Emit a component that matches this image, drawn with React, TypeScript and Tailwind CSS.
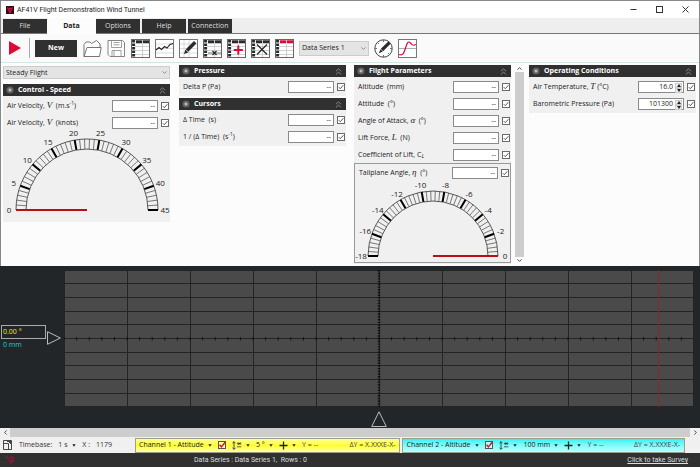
import { useState, type ReactNode } from "react";
import { ChevronDown, ChevronUp, ChevronLeft, ChevronRight, ChevronsUp } from "lucide-react";

const tabs = ["File", "Data", "Options", "Help", "Connection"];

function Sym({ children }: { children: ReactNode }) {
    return <i className="font-['Liberation_Serif',serif] text-[9px] leading-none">{children}</i>;
}

function Tick({ label }: { label: string }) {
    return (
        <span className="relative flex size-2 shrink-0">
            <input
                type="checkbox"
                defaultChecked
                aria-label={label}
                className="peer size-2 appearance-none border border-[#6a6a6a] bg-white"
            />
            <svg
                viewBox="0 0 8 8"
                className="pointer-events-none absolute inset-0 hidden size-2 peer-checked:block"
                fill="none"
                stroke="#444"
            >
                <path d="M1.8 4.2 3.3 5.7 6.4 2.2" strokeWidth="0.9" />
            </svg>
        </span>
    );
}

type RowProps = { id: string; label: ReactNode; value?: string; spin?: boolean };

function Row({ id, label, value = "--", spin }: RowProps) {
    return (
        <div className="flex h-[17px] items-center gap-[3px] pr-px pl-1">
            <label htmlFor={id} className="flex-1 whitespace-pre text-[#222]">
                {label}
            </label>
            <div className="flex h-3 w-[46px] border border-[#8a8a8a] bg-white">
                <input
                    id={id}
                    defaultValue={value}
                    className="w-0 min-w-0 flex-1 bg-transparent px-0.5 text-right text-[#222] outline-none"
                />
                {spin && (
                    <span className="my-px mr-px flex w-[7px] flex-col">
                        <button aria-label="Increase" className="flex flex-1 items-center justify-center border border-[#ccc] bg-[#eee]">
                            <svg viewBox="0 0 4 3" className="h-[3px] w-1">
                                <path d="M0 3 2 0 4 3z" fill="#222" />
                            </svg>
                        </button>
                        <button aria-label="Decrease" className="flex flex-1 items-center justify-center border border-[#ccc] bg-[#eee]">
                            <svg viewBox="0 0 4 3" className="h-[3px] w-1">
                                <path d="M0 0 2 3 4 0z" fill="#222" />
                            </svg>
                        </button>
                    </span>
                )}
            </div>
            <Tick label={`Show ${id}`} />
        </div>
    );
}

function Panel({ title, children }: { title: string; children: ReactNode }) {
    const [open, setOpen] = useState(true);
    return (
        <section className="bg-[#f0f0f0]">
            <h2>
                <button
                    onClick={() => setOpen(!open)}
                    aria-expanded={open}
                    className="flex h-3 w-full items-center bg-[#303030] pr-0.5 pl-[3px] text-left font-bold text-white"
                >
                    <svg viewBox="0 0 8 8" className="mr-1 size-2">
                        <circle cx="4" cy="4" r="3.6" fill="#606060" />
                        <circle cx="4" cy="4" r="1.8" fill="#999" />
                        <circle cx="4" cy="4" r="0.9" fill="#ccc" />
                    </svg>
                    <span className="flex-1">{title}</span>
                    <ChevronsUp className="size-[11px] text-[#8b939c]" strokeWidth={2} />
                </button>
            </h2>
            {open && <div className="py-px">{children}</div>}
        </section>
    );
}

type GaugeProps = {
    labels: number[];
    width: number;
    height: number;
    cx: number;
    cy: number;
    radius: number;
    atEnd?: boolean;
};

function Gauge({ labels, width, height, cx, cy, radius, atEnd }: GaugeProps) {
    const inner = radius - 10;
    const steps = (labels.length - 1) * 5;
    const at = (r: number, i: number) => {
        const a = Math.PI * (1 - i / steps);
        return [cx + r * Math.cos(a), cy - r * Math.sin(a)];
    };
    const line = (i: number) => {
        const [x1, y1] = at(inner, i);
        const [x2, y2] = at(radius, i);
        return `M${x1} ${y1}L${x2} ${y2}`;
    };
    const arc = (r: number) => `M${cx - r} ${cy}A${r} ${r} 0 0 1 ${cx + r} ${cy}`;
    const all = Array.from({ length: steps + 1 }, (_, i) => i);

    return (
        <svg viewBox={`0 0 ${width} ${height}`} className="block w-full overflow-visible" fill="none">
            <path d={arc(radius) + arc(inner)} stroke="#333" strokeWidth="0.8" />
            <path d={all.filter((i) => i % 5).map(line).join("")} stroke="#444" strokeWidth="0.7" />
            <path d={all.filter((i) => i % 5 === 0).map(line).join("")} stroke="#000" strokeWidth="2" />
            <path d={`M${cx} ${cy}H${atEnd ? cx + radius : cx - radius}`} stroke="#b80f14" strokeWidth="1.8" />
            {labels.map((n, i) => {
                const [x, y] = at(radius + 7, i * 5);
                return (
                    <text key={n} x={x} y={y + 3} textAnchor="middle" fontSize="8" fill="#222">
                        {n}
                    </text>
                );
            })}
        </svg>
    );
}

function ToolButton({ label, children }: { label: string; children: ReactNode }) {
    return (
        <button aria-label={label} className="size-[19px] shrink-0">
            <svg viewBox="0 0 19 19" className="size-[19px]" fill="none">
                {children}
            </svg>
        </button>
    );
}

function Grid({ head = "#2b2b2b" }: { head?: string }) {
    return (
        <>
            <rect x="0.5" y="0.5" width="18" height="18" fill="#fff" stroke="#666" />
            <path d="M4 7.5H18M4 11.5H18M4 15.5H18M11.5 5V18" stroke="#c4c4c4" strokeWidth="0.8" />
            <path d="M5 2.8H18" stroke={head} strokeWidth="3" />
            <path d="M11.5 1V5" stroke="#fff" strokeWidth="0.7" />
            <path d="M2.6 1V18" stroke="#2b2b2b" strokeWidth="3" strokeDasharray="2.6 0.9" />
        </>
    );
}

function Caret() {
    return (
        <svg viewBox="0 0 4 3" className="ml-1 h-[3px] w-1 shrink-0">
            <path d="M0.3 0.3H3.7L2 2.8z" fill="#222" />
        </svg>
    );
}

function Pick({ label, value }: { label: string; value: string }) {
    return (
        <span className="flex items-center">
            <select aria-label={label} className="appearance-none bg-transparent outline-none">
                <option>{value}</option>
            </select>
            <Caret />
        </span>
    );
}

function Channel({ name, scale, tone }: { name: string; scale: string; tone: string }) {
    return (
        <div className={`flex h-[15px] items-center gap-[6px] border border-[#9aa08a] px-[3px] text-[#222] ${tone}`}>
            <Pick label="Channel" value={name} />
            <span className="relative flex size-2 shrink-0">
                <input
                    type="checkbox"
                    defaultChecked
                    aria-label={`Show ${name}`}
                    className="peer size-2 appearance-none border border-[#555] bg-white/50"
                />
                <svg viewBox="0 0 8 8" className="pointer-events-none absolute inset-0 hidden size-2 peer-checked:block" fill="none">
                    <path d="M1.6 3.8 3.4 6 7.6 0.8" stroke="#d3122f" strokeWidth="1.4" />
                </svg>
            </span>
            <button aria-label="Offset" className="flex items-center">
                <svg viewBox="0 0 10 9" className="h-[9px] w-[10px]" fill="none" stroke="#222" strokeWidth="0.8">
                    <path d="M2 0.8V8.2M0.4 2.2 2 0.6 3.6 2.2M0.4 6.8 2 8.4 3.6 6.8" />
                    <path d="M5 2.6H9.4M5 5.8H9.4M5.9 1.2 8.5 4M8.5 1.2 5.9 4" strokeWidth="0.7" />
                </svg>
                <Caret />
            </button>
            <Pick label="Scale" value={scale} />
            <button aria-label="Cursor" className="flex items-center">
                <svg viewBox="0 0 9 9" className="size-[9px]" stroke="#222" strokeWidth="1.3">
                    <path d="M4.5 0.5V8.5M0.5 4.5H8.5" />
                </svg>
                <Caret />
            </button>
            <span className="text-[#444]">Y = --</span>
            <span className="ml-auto pr-px text-[#444]">ΔY = X.XXXE-X-</span>
        </div>
    );
}

function Plot() {
    const rest = [1, 2, 3, 4, 5, 6, 7, 8, 9];
    const ticks = Array.from({ length: 51 }, (_, i) => i);
    return (
        <svg viewBox="0 0 630 136" preserveAspectRatio="none" className="h-full w-full bg-[#4a4a4a]" fill="none">
            <g stroke="#242424" strokeWidth="1" shapeRendering="crispEdges">
                {rest.map((i) => (
                    <path key={i} d={`M0 ${i * 13.6}H630M${i * 63} 0V136`} vectorEffect="non-scaling-stroke" />
                ))}
                <rect x="0.5" y="0.5" width="629" height="135" />
            </g>
            <path d={ticks.map((i) => `M${i * 12.6} 66.5V70`).join("")} stroke="#151515" />
            <path d="M315 0V136" stroke="#101010" strokeWidth="2.4" strokeDasharray="1.4 1.3" />
            <path d="M594.5 0V136" stroke="#8e2622" strokeWidth="1" />
        </svg>
    );
}

export default function App() {
    const [tab, setTab] = useState("Data");

    return (
        <div className="flex min-h-screen flex-col bg-[#fcfcfc] font-['Open_Sans',sans-serif] text-[7px] leading-[10px]">
            <div className="border-x border-t border-[#888]">
                <header className="flex h-[17px] items-center bg-white pr-px pl-[5px]">
                    <svg viewBox="0 0 8 8" className="mr-[3px] size-2">
                        <rect width="8" height="8" fill="#2a1016" />
                        <path d="M1.5 1.5 4 6.5 6.5 1.5M3 2.5H5" stroke="#e0103a" strokeWidth="1.3" fill="none" />
                    </svg>
                    <h1 className="flex-1 font-[Roboto,sans-serif] text-[#222]">AF41V Flight Demonstration Wind Tunnel</h1>
                    <div className="flex">
                        <button aria-label="Minimize" className="flex w-[26px] justify-center">
                            <svg viewBox="0 0 7 7" className="size-[7px]" stroke="#333">
                                <path d="M0.5 3.5H6.5" />
                            </svg>
                        </button>
                        <button aria-label="Maximize" className="flex w-[26px] justify-center">
                            <svg viewBox="0 0 7 7" className="size-[7px]" stroke="#333" fill="none">
                                <rect x="0.5" y="0.5" width="6" height="6" />
                            </svg>
                        </button>
                        <button aria-label="Close" className="flex w-[26px] justify-center">
                            <svg viewBox="0 0 7 7" className="size-[7px]" stroke="#333">
                                <path d="M0.5 0.5 6.5 6.5M6.5 0.5 0.5 6.5" />
                            </svg>
                        </button>
                    </div>
                </header>

                <nav className="flex h-4 items-end gap-0.5 border-b border-[#777] bg-[#eee] pl-0.5">
                    {tabs.map((t) => (
                        <button
                            key={t}
                            onClick={() => setTab(t)}
                            className={
                                t === tab
                                    ? "-mx-0.5 -mb-px h-4 w-[49px] bg-[#fcfcfc] font-bold text-[#222]"
                                    : "h-[14px] w-11 bg-[#303030] text-[#ddd]"
                            }
                        >
                            {t}
                        </button>
                    ))}
                </nav>

                <div className="flex h-[29px] items-center gap-[5px] border-b border-[#d5e3ea] bg-[#fafafa] pl-2">
                    <button aria-label="Run">
                        <svg viewBox="0 0 12 14" className="h-[14px] w-3">
                            <path d="M0 0 12 7 0 14z" fill="#dc0a35" />
                        </svg>
                    </button>
                    <span className="ml-[3px] h-5 w-px bg-[#aaa]" />
                    <button className="mr-px h-[17px] w-[42px] bg-[#303030] font-bold text-white">New</button>
                    <ToolButton label="Open">
                        <path d="M1 17.5V5.5L3 3H7L8.5 4.5 13.5 1.5 17 5V8M1 17.5 4 8.5H18.2L16.5 17.5z" stroke="#666" strokeWidth="0.9" fill="#fff" />
                    </ToolButton>
                    <ToolButton label="Save">
                        <path d="M1 1.5H15.5L17.5 3.5V17.5H3L1 15.5z" stroke="#777" strokeWidth="0.9" fill="#fff" />
                        <path d="M4.5 1.5V8.5H14.5V1.5M5 17.5V11.5H14V17.5M6.5 3.5H12.5M6.5 5.8H12.5M7 12V17" stroke="#888" strokeWidth="0.8" />
                    </ToolButton>
                    <ToolButton label="Table">
                        <Grid />
                    </ToolButton>
                    <ToolButton label="Chart">
                        <rect x="0.5" y="0.5" width="18" height="18" fill="#fff" stroke="#777" />
                        <path d="M1 5H18M1 9.5H18M1 14H18" stroke="#ccc" strokeWidth="0.7" />
                        <path d="M1 11 4 8.5 6.5 10.5 9.5 7.5 12 9 15 5.5 18 4.5" stroke="#222" strokeWidth="1.1" />
                    </ToolButton>
                    <ToolButton label="Edit notes">
                        <rect x="0.5" y="0.5" width="18" height="18" fill="#fff" stroke="#777" />
                        <path d="M1 5H18M1 9.5H18M1 14H18M5 1V18M10 1V18" stroke="#ccc" strokeWidth="0.7" />
                        <path d="M8 11.5 16.2 3.3" stroke="#2b2b2b" strokeWidth="3.4" />
                        <path d="M5 15 6.4 10.6 9.2 13.4z" fill="#2b2b2b" />
                    </ToolButton>
                    <ToolButton label="Delete row">
                        <Grid />
                        <path d="M5 14H18" stroke="#444" strokeWidth="0.8" />
                        <path d="M9.5 12 13.5 16M13.5 12 9.5 16" stroke="#222" strokeWidth="1.1" />
                    </ToolButton>
                    <ToolButton label="Add series">
                        <Grid />
                        <path d="M11.3 6.5V15.5M6.8 11H15.8" stroke="#dc0a35" strokeWidth="2" />
                    </ToolButton>
                    <ToolButton label="Delete series">
                        <Grid />
                        <path d="M6 5.5 16 15.5M16 5.5 6 15.5" stroke="#222" strokeWidth="1.2" />
                    </ToolButton>
                    <ToolButton label="Series header">
                        <Grid head="#dc0a35" />
                    </ToolButton>
                    <span className="relative flex items-center">
                        <select aria-label="Data series" className="h-[15px] w-[70px] appearance-none border border-[#ccc] bg-[#e4e4e4] pl-0.5 text-[#222]">
                            <option>Data Series 1</option>
                        </select>
                        <ChevronDown className="pointer-events-none absolute right-0.5 size-[7px] text-[#555]" />
                    </span>
                    <ToolButton label="Calibrate">
                        <circle cx="9.5" cy="9.5" r="8.7" stroke="#444" strokeWidth="1" fill="#fff" />
                        <path d="M9.5 1V3M9.5 16V18M1 9.5H3M16 9.5H18M3.5 3.5 5 5M14 14 15.5 15.5" stroke="#555" strokeWidth="0.8" />
                        <path d="M8 11 15.4 3.6" stroke="#2b2b2b" strokeWidth="3.2" />
                        <path d="M4.8 14.2 6.5 10.2 8.8 12.5z" fill="#2b2b2b" />
                    </ToolButton>
                    <ToolButton label="Curve">
                        <rect x="0.5" y="0.5" width="18" height="18" fill="#fff" stroke="#777" />
                        <path d="M1 9.5H18" stroke="#999" strokeWidth="0.8" />
                        <path d="M1 15.5C5 17 6 14 7.5 9S10 2 12 3.5 13.5 7.5 18 5.5" stroke="#dc0a35" strokeWidth="1.2" />
                    </ToolButton>
                </div>

                <main className="flex bg-[#fcfcfc] pt-0.5 pr-[3px] pb-0.5 pl-0.5">
                    <div className="min-w-0 flex-[167]">
                        <span className="relative mt-px mb-[5px] flex items-center">
                            <select aria-label="Flight mode" className="h-[13px] w-full appearance-none border border-[#ccc] bg-[#e4e4e4] pl-0.5 text-[#222]">
                                <option>Steady Flight</option>
                            </select>
                            <ChevronDown className="pointer-events-none absolute right-0.5 size-[7px] text-[#555]" />
                        </span>
                        <Panel title="Control - Speed">
                            <Row id="speed" label={<>Air Velocity, <Sym>V</Sym>  (m.s<sup className="text-[5px] leading-none">-1</sup>)</>} />
                            <Row id="knots" label={<>Air Velocity, <Sym>V</Sym>  (knots)</>} />
                            <Gauge labels={[0, 5, 10, 15, 20, 25, 30, 35, 40, 45]} width={167} height={90} cx={84} cy={79} radius={71} />
                        </Panel>
                    </div>

                    <div className="ml-[9px] flex min-w-0 flex-[167] flex-col gap-0.5">
                        <Panel title="Pressure">
                            <Row id="delta-p" label="Delta P (Pa)" />
                        </Panel>
                        <Panel title="Cursors">
                            <Row id="time" label="Δ Time  (s)" />
                            <Row id="rate" label={<>1 / (Δ Time)  (s<sup className="text-[5px] leading-none">-1</sup>)</>} />
                        </Panel>
                    </div>

                    <div className="ml-2 min-w-0 flex-[157]">
                        <Panel title="Flight Parameters">
                            <Row id="altitude" label="Altitude  (mm)" />
                            <Row id="attitude" label="Attitude  (°)" />
                            <Row id="attack" label={<>Angle of Attack, <Sym>α</Sym>  (°)</>} />
                            <Row id="lift" label={<>Lift Force, <Sym>L</Sym>  (N)</>} />
                            <Row id="coefficient" label={<>Coefficient of Lift, C<sub className="text-[6px] leading-none italic">L</sub></>} />
                            <div className="border border-[#999]">
                                <Row id="tailplane" label={<>Tailplane Angle, <Sym>η</Sym>  (°)</>} />
                                <Gauge labels={[-18, -16, -14, -12, -10, -8, -6, -4, -2, 0]} width={155} height={81} cx={78} cy={75} radius={65} atEnd />
                            </div>
                        </Panel>
                    </div>

                    <div className="ml-1 flex w-[9px] flex-col items-center text-[#333]">
                        <button aria-label="Scroll up"><ChevronUp className="size-[7px]" strokeWidth={3} /></button>
                        <div className="w-full flex-1 bg-[#cdcdcd]" />
                        <button aria-label="Scroll down"><ChevronDown className="size-[7px]" strokeWidth={3} /></button>
                    </div>

                    <div className="ml-[5px] min-w-0 flex-[167]">
                        <Panel title="Operating Conditions">
                            <Row id="temperature" label={<>Air Temperature, <Sym>T</Sym> (°C)</>} value="16.0" spin />
                            <Row id="barometric" label="Barometric Pressure (Pa)" value="101300" spin />
                        </Panel>
                    </div>
                </main>
            </div>

            <section className="flex flex-1 bg-[#232628] pt-1 pr-1.5">
                <div className="flex w-16 items-center pb-[22px]">
                    <div className="w-[46px] pb-0.5 pl-px">
                        <div className="flex h-[14px] items-center border border-[#aaa] pl-px text-[#e8e81c]">0.00 °</div>
                        <div className="mt-px pl-0.5 text-[#1fd0cc]">0 mm</div>
                    </div>
                    <svg viewBox="0 0 14 14" className="ml-px h-[14px] w-[14px]" fill="none" stroke="#bbb">
                        <path d="M0.5 0.7 13.3 7 0.5 13.3z" />
                    </svg>
                </div>
                <div className="flex min-w-0 flex-1 flex-col items-center">
                    <div className="h-0 min-h-[136px] w-full flex-1">
                        <Plot />
                    </div>
                    <svg viewBox="0 0 16 16" className="mt-1 mb-px size-4" fill="none" stroke="#bbb">
                        <path d="M8 0.8 15.3 15.5H0.7z" />
                    </svg>
                </div>
            </section>

            <div className="flex h-[9px] bg-[#cdcdcd] text-[#333]">
                <button aria-label="Scroll left" className="flex w-[10px] items-center justify-center bg-[#f0f0f0]">
                    <ChevronLeft className="size-[7px]" strokeWidth={3} />
                </button>
                <div className="flex-1" />
                <button aria-label="Scroll right" className="flex w-[10px] items-center justify-center bg-[#f0f0f0]">
                    <ChevronRight className="size-[7px]" strokeWidth={3} />
                </button>
            </div>

            <div className="flex h-4 items-center bg-[#f0f0f0] pr-[15px] pl-[3px] text-[#333]">
                <button aria-label="Fit view">
                    <svg viewBox="0 0 9 10" className="h-[10px] w-[9px]" fill="none" stroke="#333" strokeWidth="0.9">
                        <path d="M0.5 0.5H8.5V9.5H0.5zM0.5 3.5H5.5V9.5M6 3 8 1M4 1.5H7.5V4" />
                    </svg>
                </button>
                <div className="flex w-[123px] items-center gap-[6px] pl-[7px]">
                    <span>Timebase:</span>
                    <Pick label="Timebase" value="1 s" />
                    <span>X :</span>
                    <span>1179</span>
                </div>
                <div className="grid flex-1 grid-cols-[265fr_282fr] gap-0.5">
                    <Channel name="Channel 1 - Attitude" scale="5 °" tone="bg-linear-to-b from-[#ffff90] via-[#ffff20] to-[#ffffa0]" />
                    <Channel name="Channel 2 - Altitude" scale="100 mm" tone="bg-linear-to-b from-[#20f4f4] to-[#b8ffff]" />
                </div>
            </div>

            <footer className="flex h-[14px] items-center bg-[#303030] pr-3 pl-[5px] font-[Roboto,sans-serif] text-[#ddd]">
                <svg viewBox="0 0 9 9" className="size-[9px]" fill="none" stroke="#a01035" strokeWidth="1.3">
                    <path d="M0.5 1.5H3M4.5 3.5C4.5 0.5 8.5 0.5 8.5 3S6 5 6 8.5M4 5H7" />
                </svg>
                <p className="ml-[180px] flex-1 whitespace-pre">Data Series : Data Series 1,  Rows : 0</p>
                <a href="#survey" className="underline">Click to take Survey</a>
            </footer>
        </div>
    );
}
